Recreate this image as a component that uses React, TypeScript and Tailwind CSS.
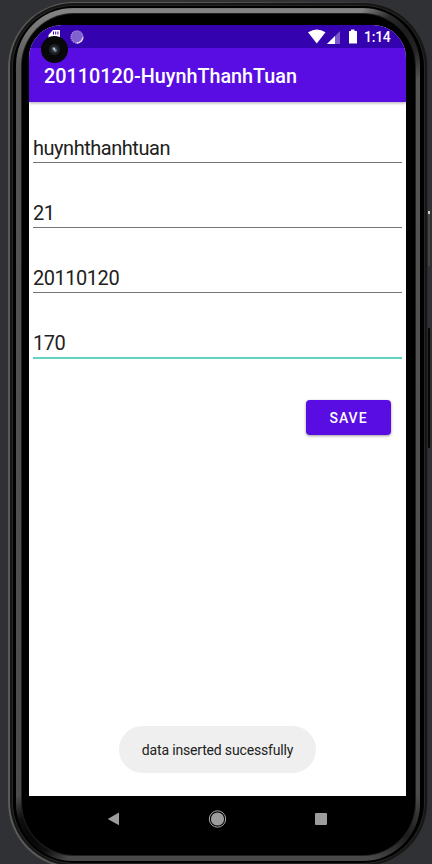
import React from "react";

const font = "font-['Roboto',sans-serif]";

function StatusBar() {
  return (
    <div className="relative flex h-[23px] shrink-0 items-center bg-[#3502b0] text-white">
      <svg className="mb-[2px] ml-[19px] h-[14px] w-[14px]" viewBox="0 0 14 14">
        <path d="M5 1H11.5Q12 1 12 1.5V12H0.5V6Z" fill="#fff" />
        <path d="M5.5 2.5v3M7.7 2.5v3M9.9 2.5v3" stroke="#3502b0" strokeWidth="1" />
      </svg>
      <svg className="ml-[8px] h-[14px] w-[14px]" viewBox="0 0 14 14">
        <circle cx="7" cy="7" r="6" fill="#8061ce" />
        <circle cx="7" cy="7" r="6" fill="none" stroke="#ab96df" strokeWidth="1.3" strokeDasharray="1.2 .8" />
        <path d="M12.8 7.5A6 6 0 0 1 6.5 13" fill="none" stroke="#ddd3f4" strokeWidth="1.5" />
      </svg>
      <svg className="ml-[224px] h-[15px] w-[18px]" viewBox="0 0 18 15">
        <path d="M0 3.3Q9-2.2 17.5 3.3L8.8 14.5Z" fill="#fff" />
      </svg>
      <svg className="ml-[1px] h-[14px] w-[14px]" viewBox="0 0 14 14">
        <path d="M13 1V14H0Z" fill="#7a59cb" />
        <path d="M8 6V14H0Z" fill="#fff" />
      </svg>
      <svg className="ml-[7px] h-[15px] w-[10px]" viewBox="0 0 10 15">
        <path d="M3 0.5H6.5V2H8.5Q9 2 9 2.5V14Q9 14.5 8.5 14.5H1.5Q1 14.5 1 14V2.5Q1 2 1.5 2H3Z" fill="#fff" />
      </svg>
      <span className="ml-[6px] mt-[1px] text-[14px] font-medium leading-4 tracking-[-0.25px]">1:14</span>
      <div className="absolute left-[12px] top-[11px] z-10 flex h-[27px] w-[27px] items-center justify-center rounded-full bg-[#080808]">
        <div className="flex h-[11px] w-[11px] items-center justify-center rounded-full bg-[#1d2024]">
          <svg className="h-[7px] w-[7px]" viewBox="0 0 7 7">
            <circle cx="3.5" cy="3.5" r="3" fill="#34414d" />
            <path d="M1 2l2-1 3 4-2 1z" fill="#7f91a5" />
            <circle cx="3.2" cy="3" r="1" fill="#c3ceda" />
          </svg>
        </div>
      </div>
    </div>
  );
}

function Field({ value, focused = false }: { value: string; focused?: boolean }) {
  return (
    <div className="h-[65px] px-1">
      <div className="h-[36px] pt-[10px] text-[20px] leading-[24px] tracking-[-0.47px] text-[#212121]">{value}</div>
      <div className={focused ? "h-[2px] bg-[#62d4c4]" : "h-px bg-[#757575]"} />
    </div>
  );
}

function NavigationBar() {
  return (
    <div className="flex h-[46px] shrink-0 items-center">
      <svg className="ml-[78px] h-[14px] w-[13px]" viewBox="0 0 13 14">
        <path d="M12 0.5V13.2L0.7 7Z" fill="#9c9c9c" />
      </svg>
      <svg className="ml-[88px] h-[19px] w-[19px]" viewBox="0 0 19 19">
        <circle cx="9.5" cy="9" r="8.2" fill="none" stroke="#aaa" />
        <circle cx="9.5" cy="9" r="6.6" fill="#9c9c9c" />
      </svg>
      <div className="ml-[88px] h-[12px] w-[12px] rounded-[1px] bg-[#9c9c9c]" />
    </div>
  );
}

function Screen() {
  return (
    <div className={`flex w-[377px] flex-col ${font}`}>
      <div className="flex h-[771px] flex-col overflow-hidden rounded-t-[33px] bg-white">
        <StatusBar />
        <header className="flex h-[54px] shrink-0 items-center bg-[#5a0de2] pl-[15px] pt-[3px] text-[19.8px] font-medium text-white shadow-[0_1px_3px_rgba(0,0,0,0.35)]">
          20110120-HuynhThanhTuan
        </header>
        <main className="flex grow flex-col pt-[24px]">
          <Field value="huynhthanhtuan" />
          <Field value="21" />
          <Field value="20110120" />
          <Field value="170" focused />
          <button className="ml-auto mr-[15px] mt-[14px] h-[35px] w-[85px] shrink-0 rounded-[4px] bg-[#5a0de2] pt-px text-[14px] font-medium tracking-[1px] text-white shadow-[0_1px_3px_rgba(0,0,0,0.4)]">
            SAVE
          </button>
          <div className="mx-auto mb-[23px] mt-auto flex h-[47px] w-[197px] shrink-0 items-center justify-center rounded-[23.5px] bg-[#efefef] pt-[2px] text-[14px] tracking-[-0.17px] text-[#212121]">
            data inserted sucessfully
          </div>
        </main>
      </div>
      <NavigationBar />
    </div>
  );
}

export default function App() {
  return (
    <div className="relative h-[864px] w-[432px] overflow-hidden bg-[#303134] pl-[8px] pt-[2px]">
      <div className="absolute left-[428px] top-[211px] h-[55px] w-[2px] bg-[#454545]">
        <div className="h-[3px] bg-[#cfcfcf]" />
      </div>
      <div className="absolute left-[428px] top-[328px] h-[120px] w-[2px] rounded-sm bg-[#050505]" />
      <div className="h-[866px] w-[420px] rounded-[66px] bg-[linear-gradient(90deg,#5b5a58_0%,#5b5a58_40%,#2a2a2a_100%)] pb-[2px] pl-[2px] pr-px pt-px">
        <div className="h-full rounded-[64px] bg-[#161616] p-[2px]">
          <div className="h-full rounded-[62px] bg-[#262626] p-px">
            <div className="h-full rounded-[61px] bg-black pb-[2px] pl-[3px] pr-[4px] pt-[2px]">
              <div className="h-full rounded-[57px] bg-[radial-gradient(circle_at_96%_3%,#1c1c1c_0,#1c1c1cdd_22px,transparent_48px),radial-gradient(circle_at_4%_97%,#060606_0,#060606dd_20px,transparent_42px),radial-gradient(circle_at_97%_97%,#1c1c1c_0,#1c1c1c88_20px,transparent_42px),linear-gradient(180deg,#777_0%,#858585_2px,#555_7%,#4c4c4c_90%,#484848_100%)] p-[5px] pr-[4px]">
                <div className="h-full rounded-[53px] bg-[#202020] p-px">
                  <div className="h-full rounded-[52px] bg-black pl-[7px] pt-[11px]">
                    <Screen />
                  </div>
                </div>
              </div>
            </div>
          </div>
        </div>
      </div>
    </div>
  );
}
